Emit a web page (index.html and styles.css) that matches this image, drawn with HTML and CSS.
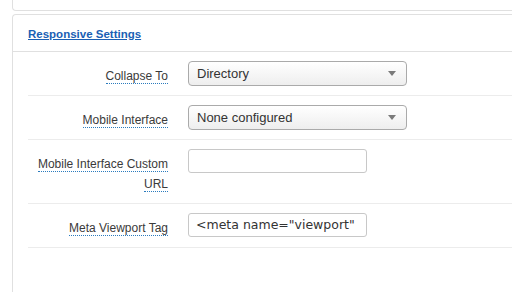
FILE: index.html
```html
<!DOCTYPE html>
<html>
<head>
<meta charset="utf-8">
<link rel="stylesheet" href="styles.css">
</head>
<body>
<div class="top-panel"></div>
<div class="panel">
  <div class="panel-head"><a class="head-link" href="#">Responsive Settings</a></div>
  <div class="rows">
    <div class="row">
      <div class="label"><span class="lbl">Collapse To</span></div>
      <div class="field">
        <div class="select"><span>Directory</span><svg class="arrow" width="8" height="5" viewBox="0 0 8 5"><path d="M0 0H8L4 5Z" fill="#7a7a7a"/></svg></div>
      </div>
    </div>
    <div class="row">
      <div class="label"><span class="lbl">Mobile Interface</span></div>
      <div class="field">
        <div class="select"><span>None configured</span><svg class="arrow" width="8" height="5" viewBox="0 0 8 5"><path d="M0 0H8L4 5Z" fill="#7a7a7a"/></svg></div>
      </div>
    </div>
    <div class="row">
      <div class="label"><span class="lbl">Mobile Interface Custom URL</span></div>
      <div class="field">
        <div class="input"></div>
      </div>
    </div>
    <div class="row">
      <div class="label"><span class="lbl">Meta Viewport Tag</span></div>
      <div class="field">
        <div class="input">&lt;meta name="viewport"</div>
      </div>
    </div>
  </div>
</div>
</body>
</html>
```
FILE: styles.css
```css
html, body {
  margin: 0;
  padding: 0;
  background: #fff;
  overflow: hidden;
}
body {
  width: 512px;
  height: 292px;
  font-family: "Liberation Sans", Arial, sans-serif;
  color: #3a3a3a;
}
.top-panel {
  margin-left: 12px;
  height: 10px;
  border-left: 1px solid #e0e0e0;
  border-bottom: 1px solid #e0e0e0;
  border-bottom-left-radius: 4px;
}
.panel {
  margin-top: 3px;
  margin-left: 12px;
  height: 277px;
  border-left: 1px solid #e0e0e0;
  border-top: 1px solid #e0e0e0;
  border-top-left-radius: 4px;
}
.panel-head {
  height: 36px;
  border-bottom: 1px solid #e0e0e0;
  padding-left: 15px;
  display: flex;
  align-items: center;
}
.head-link {
  font-size: 11.5px;
  font-weight: bold;
  color: #1a5fb4;
  text-decoration: underline;
  margin-top: 2px;
}
.rows {
  margin-left: 15px;
}
.row {
  display: flex;
  padding: 9px 0;
  border-bottom: 1px solid #ececec;
}
.label {
  width: 140px;
  text-align: right;
  font-size: 12px;
  line-height: 20px;
  padding-top: 5px;
}
.lbl {
  border-bottom: 1px dotted #2b7bbd;
}
.field {
  margin-left: 20px;
}
.select {
  box-sizing: border-box;
  width: 219px;
  height: 25px;
  border: 1px solid #aaa;
  border-radius: 4px;
  background: linear-gradient(#ffffff, #eeeeee);
  display: flex;
  align-items: center;
  justify-content: space-between;
  padding: 0 10px 0 8px;
  font-size: 13px;
  color: #333;
}
.arrow {
  display: block;
}
.input {
  box-sizing: border-box;
  width: 179px;
  height: 24px;
  border: 1px solid #c8c8c8;
  border-radius: 3px;
  padding-left: 7px;
  font-family: "DejaVu Sans", Verdana, sans-serif;
  font-size: 12.5px;
  line-height: 22px;
  color: #333;
  white-space: nowrap;
  overflow: hidden;
}
```
